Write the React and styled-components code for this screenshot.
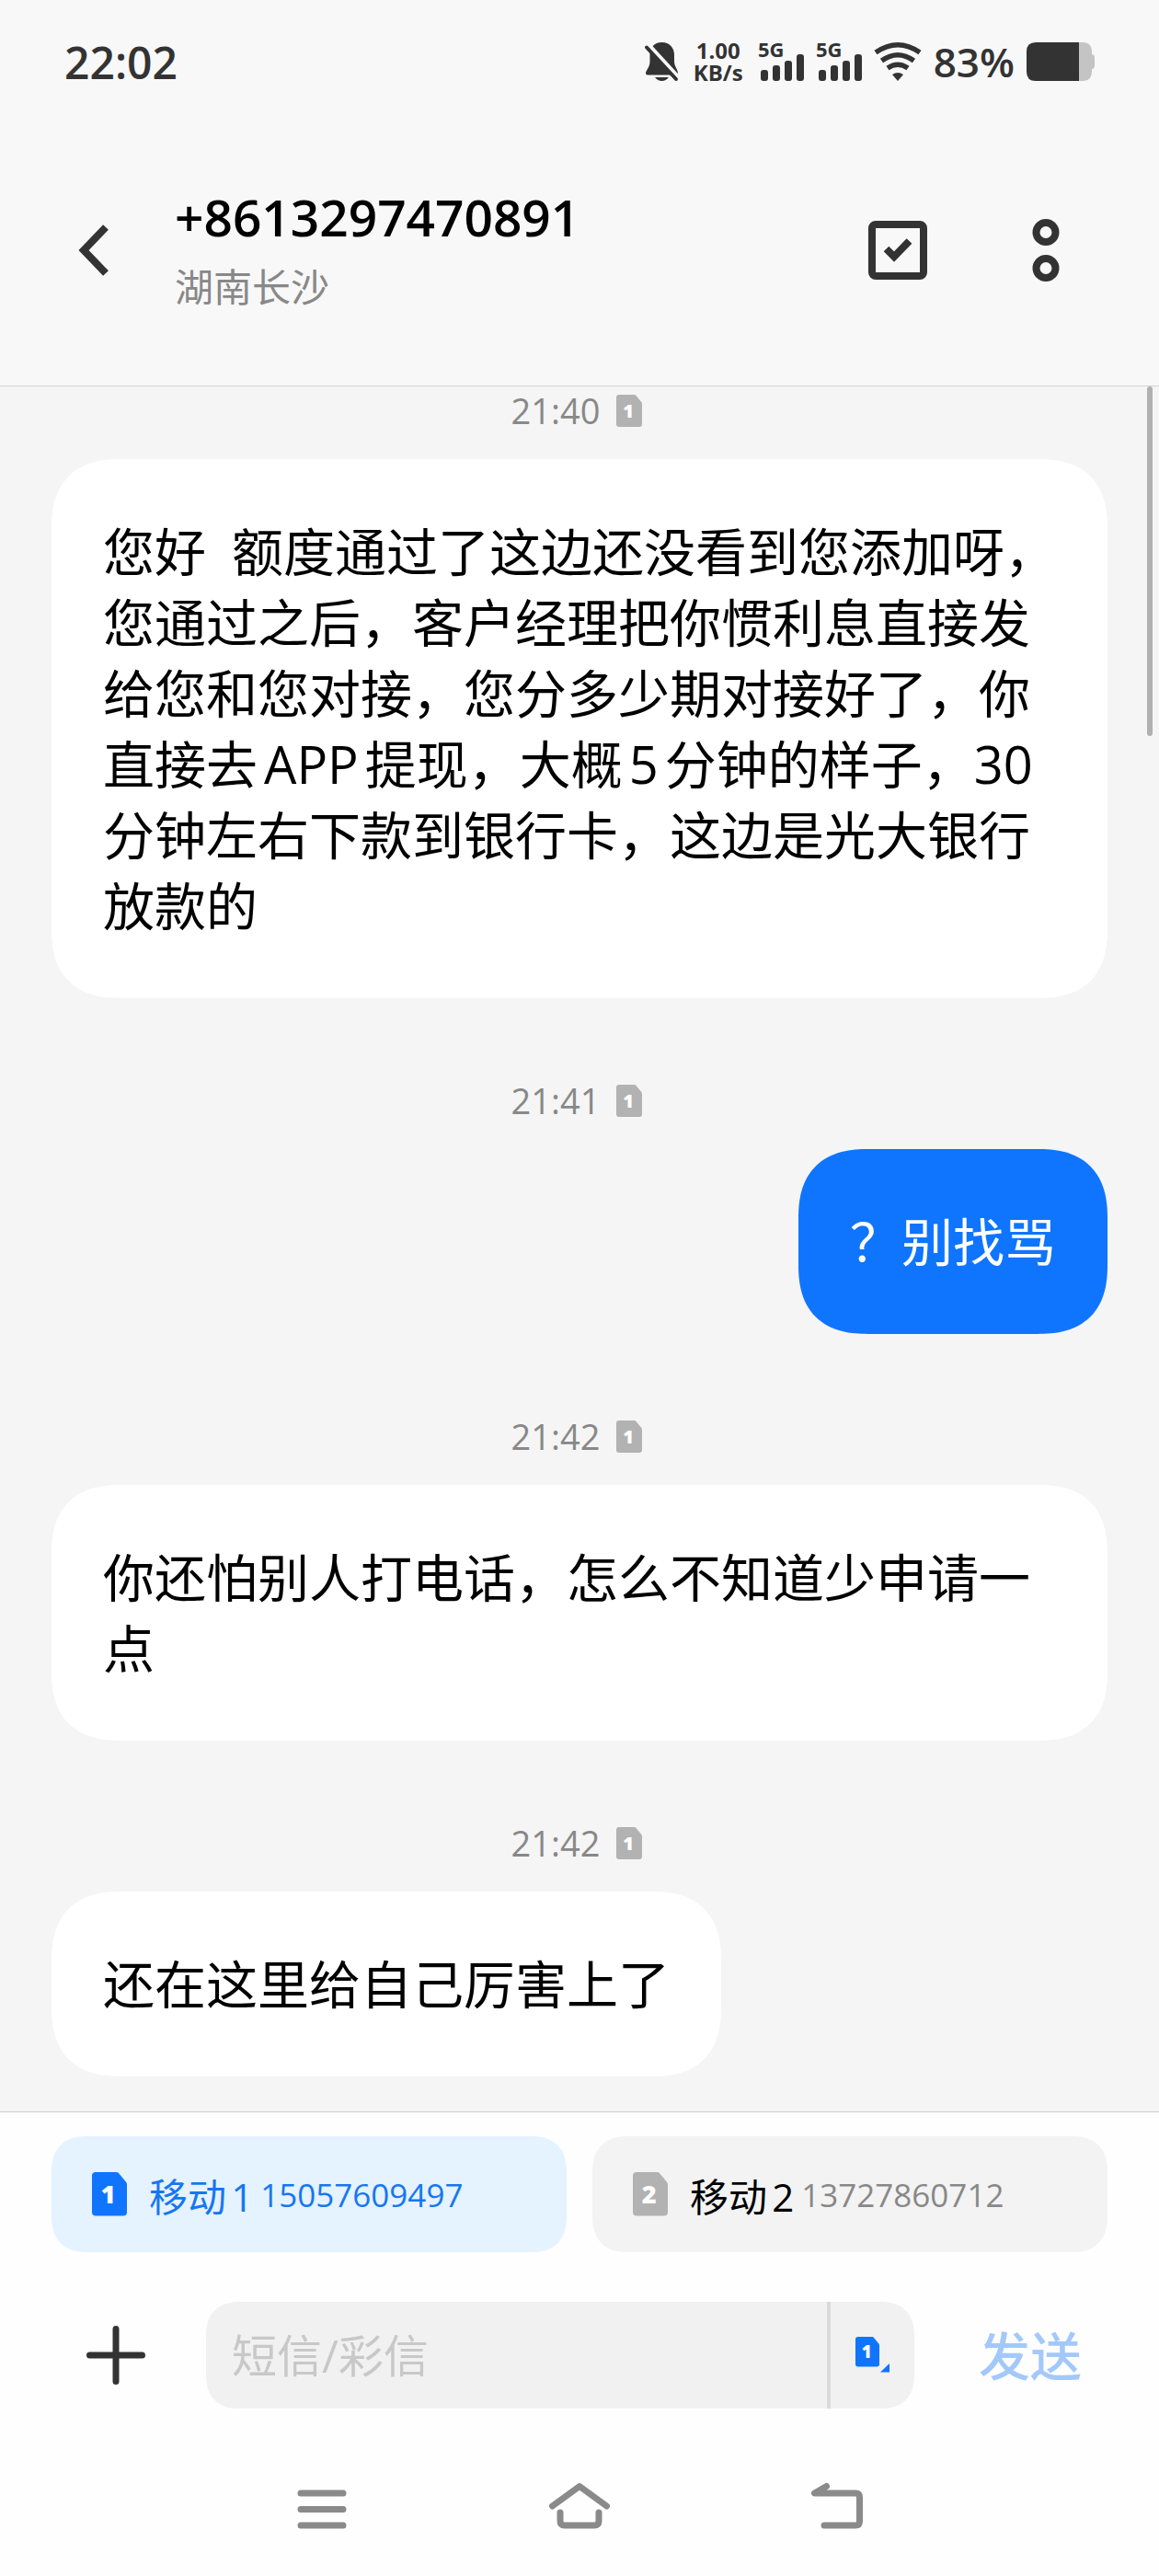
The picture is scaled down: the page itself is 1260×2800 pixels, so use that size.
import styled, { createGlobalStyle, css } from "styled-components";

const GlobalStyle = createGlobalStyle`
  * {
    box-sizing: border-box;
  }

  body {
    margin: 0;
    background: #f5f5f5;
    color: #000;
    font-family: "Open Sans", "Noto Sans CJK SC", sans-serif;
    text-autospace: normal;
  }

  button,
  input {
    margin: 0;
    padding: 0;
    border: 0;
    background: none;
    color: inherit;
    font: inherit;
  }

  button {
    cursor: pointer;
  }

  svg {
    display: block;
    flex: none;
    overflow: visible;
  }
`;

const squircle = (radius, shaped) => css`
  border-radius: ${radius}px;

  @supports (corner-shape: squircle) {
    border-radius: ${shaped}px;
    corner-shape: superellipse(1.3);
  }
`;

const Screen = styled.div`
  display: flex;
  flex-direction: column;
  min-height: 100vh;
`;

/* ---------- status bar ---------- */

const StatusBar = styled.div`
  display: flex;
  align-items: center;
  justify-content: space-between;
  height: 134px;
  padding: 0 70px;
  background: #f8f8f8;
  color: #333;
`;

const Clock = styled.time`
  font-size: 48px;
  font-weight: 600;
`;

const StatusIcons = styled.div`
  display: flex;
  align-items: center;
  gap: 13px;
`;

const Speed = styled.div`
  width: 60px;
  font-size: 24px;
  font-weight: 700;
  line-height: 24px;
  text-align: center;
`;

const Battery = styled.span`
  font-size: 44px;
  font-weight: 600;
  line-height: 48px;
`;

/* ---------- header ---------- */

const Header = styled.header`
  display: flex;
  align-items: center;
  height: 286px;
  padding: 0 91px 10px 70px;
  border-bottom: 1px solid #d4d4d4;
  background: #f8f8f8;
`;

const IconButton = styled.button`
  display: flex;
  align-items: center;
  justify-content: center;
  width: ${({ $width }) => $width || 64}px;
  height: 84px;
  color: #333;
`;

const Contact = styled.div`
  flex: 1;
  margin-left: 56px;
  padding-top: 8px;
`;

const Phone = styled.h1`
  margin: 0;
  font-size: 55px;
  font-weight: 600;
  line-height: 72px;
`;

const Region = styled.p`
  margin: 0;
  color: #888;
  font-size: 42px;
  line-height: 80px;
`;

const Actions = styled.div`
  display: flex;
  gap: 97px;
`;

/* ---------- messages ---------- */

const Thread = styled.main`
  position: relative;
  flex: 1;
  display: flex;
  flex-direction: column;
  padding: 1px 56px 0;
`;

const Scrollbar = styled.div`
  position: absolute;
  top: 0;
  right: 7px;
  width: 6px;
  height: 380px;
  border-radius: 3px;
  background: #b0b0b0;
`;

const Stamp = styled.div`
  display: flex;
  align-items: center;
  justify-content: center;
  gap: 18px;
  height: 50px;
  margin-bottom: 28px;
  padding-right: 6px;
  color: #888;
  font-size: 38px;
`;

const Message = styled.article`
  display: flex;
  flex-direction: column;
  margin-bottom: 86px;

  &:last-of-type {
    margin-bottom: 38px;
  }
`;

const Bubble = styled.p`
  align-self: ${({ $mine }) => ($mine ? "flex-end" : "flex-start")};
  margin: 0;
  padding: 62px 56px;
  background: ${({ $mine }) => ($mine ? "#0f75ff" : "#fff")};
  color: ${({ $mine }) => ($mine ? "#fff" : "#000")};
  font-size: 56px;
  line-height: 77px;
  white-space: pre-wrap;
  ${squircle(60, 76)}
`;

/* ---------- bottom panel ---------- */

const Panel = styled.footer`
  border-top: 1px solid #ccc;
  background: #fefefe;
`;

const SimRow = styled.div`
  display: grid;
  grid-template-columns: 1fr 1fr;
  gap: 28px;
  padding: 26px 56px 54px;
`;

const SimCard = styled.button`
  display: flex;
  align-items: center;
  height: 126px;
  padding: 0 44px;
  background: ${({ $active }) => ($active ? "#e5f2ff" : "#f3f3f3")};
  color: ${({ $active }) => ($active ? "#1677f0" : "#888")};
  ${squircle(32, 40)}
`;

const SimName = styled.span`
  margin: 0 8px 0 24px;
  color: ${({ $active }) => ($active ? "inherit" : "#000")};
  font-size: 42px;
`;

const SimNumber = styled.span`
  font-size: 35px;
`;

const Composer = styled.form`
  display: flex;
  align-items: center;
  padding: 0 56px;
`;

const Field = styled.div`
  flex: 1;
  display: flex;
  height: 116px;
  margin: 0 42px 0 28px;
  background: #f1f1f1;
  overflow: hidden;
  ${squircle(32, 38)}
`;

const TextInput = styled.input`
  flex: 1;
  min-width: 0;
  padding-left: 28px;
  outline: none;
  font-size: 49px;

  &::placeholder {
    color: #c8c8c8;
    opacity: 1;
  }
`;

const SimSwitch = styled.button`
  display: flex;
  align-items: center;
  justify-content: center;
  width: 95px;
  border-left: 4px solid #dadada;
`;

const Send = styled.button`
  width: 168px;
  padding-bottom: 6px;
  color: #a3c8fb;
  font-size: 56px;
  font-weight: 500;
`;

const NavBar = styled.nav`
  display: grid;
  grid-template-columns: repeat(3, 1fr);
  justify-items: center;
  align-items: center;
  height: 182px;
  padding: 25px calc(100% / 6) 0;
`;

const NavButton = styled.button`
  padding: 12px;
  color: #8a8a8a;
`;

/* ---------- icons ---------- */

const SimIcon = ({ slot, width = 28, fill = "#b2b2b2" }) => (
  <svg width={width} height={(width * 5) / 4} viewBox="0 0 28 35">
    <path
      d="M3 0H19.5Q20.6 0 21.3 .8L27.3 8Q28 8.800 28 10V32Q28 35 25 35H3Q0 35 0 32V3Q0 0 3 0Z"
      fill={fill}
    />
    <text
      x="13"
      y="25"
      fill="#fff"
      fontSize="20"
      fontWeight="800"
      textAnchor="middle"
    >
      {slot}
    </text>
  </svg>
);

const BellOffIcon = () => (
  <svg width="37" height="42" viewBox="0 0 37 42" fill="currentColor">
    <path d="M18.500 0C27 0 32 6 32 13.500V21C32 26 36 30 36 33.500Q36 35.500 34 35.500H3Q1 35.500 1 33.500C1 31 5.500 27 5.500 21V13.500C5.500 6 10 0 18.500 0Z" />
    <path d="M11 38H26Q23 42 18.500 42T11 38Z" />
    <path d="M3.500 2.500L37 39" stroke="#f8f8f8" strokeWidth="5" />
    <path
      d="M2 5.500L34 40"
      stroke="currentColor"
      strokeWidth="4"
      strokeLinecap="round"
    />
  </svg>
);

const SignalIcon = () => (
  <svg width="50" height="42" viewBox="0 0 50 42" fill="currentColor">
    <text x="0" y="16" fontSize="22" fontWeight="700">
      5G
    </text>
    <rect x="3" y="30" width="8" height="12" rx="3" />
    <rect x="16" y="25" width="8" height="17" rx="3" />
    <rect x="29" y="20" width="8" height="22" rx="3" />
    <rect x="42" y="13" width="8" height="29" rx="3" />
  </svg>
);

const WifiIcon = () => (
  <svg
    width="52"
    height="42"
    viewBox="0 0 52 42"
    fill="none"
    stroke="currentColor"
    strokeWidth="5.500"
  >
    <path d="M2 11Q26 -5.500 50 11" />
    <path d="M8.500 20Q26 7.500 43.500 20" />
    <path d="M15 28Q26 20.500 37 28" />
    <path d="M20 35Q26 31 32 35L26 42Z" fill="currentColor" stroke="none" />
  </svg>
);

const BatteryIcon = () => (
  <svg width="74" height="42" viewBox="0 0 74 42">
    <path
      d="M57 0H61Q71 0 71 11V13Q74 13 74 17V25Q74 29 71 29V31Q71 42 61 42H57Z"
      fill="#c4c4c4"
    />
    <path d="M57 0H10Q0 0 0 10V32Q0 42 10 42H57Z" fill="currentColor" />
  </svg>
);

const BackIcon = () => (
  <svg
    width="34"
    height="56"
    viewBox="0 0 34 56"
    fill="none"
    stroke="currentColor"
    strokeWidth="8"
  >
    <path d="M30 3L6 28L30 53" />
  </svg>
);

const SelectIcon = () => (
  <svg
    width="64"
    height="64"
    viewBox="0 0 64 64"
    fill="none"
    stroke="currentColor"
    strokeWidth="8"
  >
    <rect x="4" y="4" width="56" height="56" rx="4" />
    <path d="M19.500 30.500L28 39L44.500 22" />
  </svg>
);

const MoreIcon = () => (
  <svg
    width="30"
    height="68"
    viewBox="0 0 30 68"
    fill="none"
    stroke="currentColor"
    strokeWidth="8"
  >
    <circle cx="15" cy="14.500" r="10.500" />
    <circle cx="15" cy="53.500" r="10.500" />
  </svg>
);

const PlusIcon = () => (
  <svg
    width="64"
    height="64"
    viewBox="0 0 64 64"
    stroke="currentColor"
    strokeWidth="7"
    strokeLinecap="round"
  >
    <path d="M32 3.500V60.500M3.500 32H60.500" />
  </svg>
);

const SimSwitchIcon = () => (
  <svg width="37" height="40" viewBox="0 0 37 40">
    <SimIcon slot={1} width={26} fill="#0f75ff" />
    <path d="M37 29V38.500H27Z" fill="#0f75ff" />
  </svg>
);

const navIcons = [
  { label: "最近任务", path: "M11 18H57M11 35.500H57M11 53H57" },
  {
    label: "主屏幕",
    path: "M4.500 32L34 10.500L63.500 32M13 39V48Q13 53 18 53H50Q55 53 55 48V39",
  },
  {
    label: "返回",
    path: "M22.500 10.500L9.500 18H54Q58.500 18 58.500 22.500V48.500Q58.500 53 54 53H20",
  },
];

const messages = [
  {
    time: "21:40",
    text: "您好\u2002额度通过了这边还没看到您添加呀，您通过之后，客户经理把你惯利息直接发给您和您对接，您分多少期对接好了，你直接去APP提现，大概5分钟的样子，30分钟左右下款到银行卡，这边是光大银行放款的",
  },
  { time: "21:41", text: "？别找骂", mine: true },
  { time: "21:42", text: "你还怕别人打电话，怎么不知道少申请一点" },
  { time: "21:42", text: "还在这里给自己厉害上了" },
];

const sims = [
  { slot: 1, name: "移动1", number: "15057609497", active: true },
  { slot: 2, name: "移动2", number: "13727860712", active: false },
];

const App = () => {
  return (
    <Screen lang="zh-CN">
      <GlobalStyle />

      <StatusBar>
        <Clock>22:02</Clock>
        <StatusIcons>
          <BellOffIcon />
          <Speed>
            1.00
            <br />
            KB/s
          </Speed>
          <SignalIcon />
          <SignalIcon />
          <WifiIcon />
          <Battery>83%</Battery>
          <BatteryIcon />
        </StatusIcons>
      </StatusBar>

      <Header>
        <IconButton type="button" aria-label="返回">
          <BackIcon />
        </IconButton>
        <Contact>
          <Phone>+8613297470891</Phone>
          <Region>湖南长沙</Region>
        </Contact>
        <Actions>
          <IconButton type="button" aria-label="选择">
            <SelectIcon />
          </IconButton>
          <IconButton type="button" aria-label="更多">
            <MoreIcon />
          </IconButton>
        </Actions>
      </Header>

      <Thread>
        <Scrollbar />
        {messages.map((message, index) => (
          <Message key={index}>
            <Stamp>
              <time>{message.time}</time>
              <SimIcon slot={1} />
            </Stamp>
            <Bubble $mine={message.mine}>{message.text}</Bubble>
          </Message>
        ))}
      </Thread>

      <Panel>
        <SimRow>
          {sims.map(({ slot, name, number, active }) => (
            <SimCard
              key={slot}
              type="button"
              $active={active}
              aria-pressed={active}
            >
              <SimIcon
                slot={slot}
                width={38}
                fill={active ? "#0f75ff" : "#b2b2b2"}
              />
              <SimName $active={active}>{name}</SimName>
              <SimNumber>{number}</SimNumber>
            </SimCard>
          ))}
        </SimRow>

        <Composer onSubmit={(event) => event.preventDefault()}>
          <IconButton type="button" $width={140} aria-label="添加">
            <PlusIcon />
          </IconButton>
          <Field>
            <TextInput
              type="text"
              placeholder="短信/彩信"
              aria-label="短信/彩信"
            />
            <SimSwitch type="button" aria-label="切换SIM卡">
              <SimSwitchIcon />
            </SimSwitch>
          </Field>
          <Send type="submit">发送</Send>
        </Composer>

        <NavBar>
          {navIcons.map(({ label, path }) => (
            <NavButton key={label} type="button" aria-label={label}>
              <svg
                width="68"
                height="60"
                viewBox="0 0 68 60"
                fill="none"
                stroke="currentColor"
                strokeWidth="7"
                strokeLinecap="round"
                strokeLinejoin="round"
              >
                <path d={path} />
              </svg>
            </NavButton>
          ))}
        </NavBar>
      </Panel>
    </Screen>
  );
};

export default App;
